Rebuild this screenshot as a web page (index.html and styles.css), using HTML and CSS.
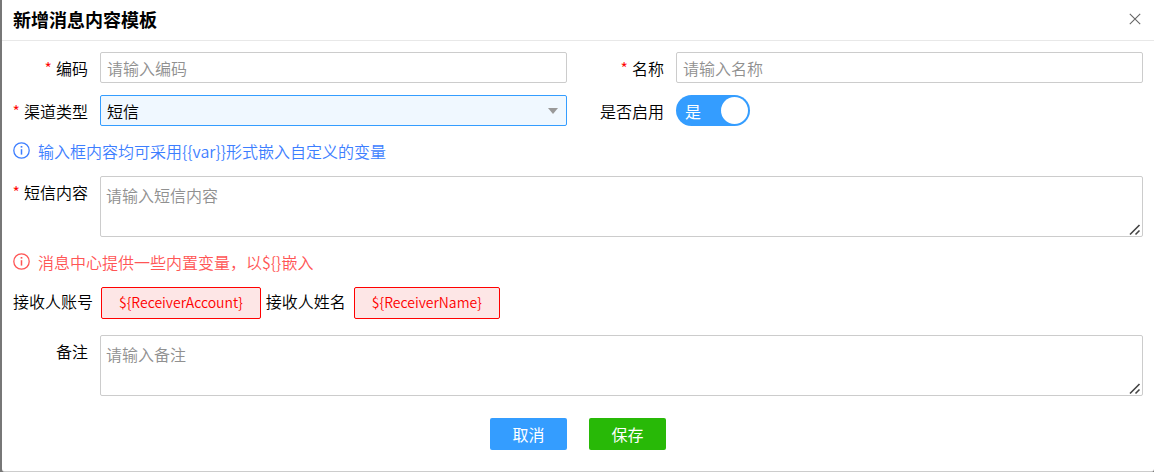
FILE: index.html
```html
<!DOCTYPE html>
<html lang="zh-CN">
<head>
    <meta charset="UTF-8">
    <meta name="viewport" content="width=device-width, initial-scale=1.0">
    <title>新增消息内容模板</title>
    <link rel="stylesheet" href="styles.css">
</head>
<body>
<div class="modal">
    <div class="modal-header">
        <h2>新增消息内容模板</h2>
        <button type="button" class="close-btn" aria-label="关闭">
            <svg width="12" height="12" viewBox="0 0 12 12" fill="none" stroke="#666" stroke-width="1.1">
                <path d="M0.8 0.8L11.2 11.2M11.2 0.8L0.8 11.2"/>
            </svg>
        </button>
    </div>
    <form class="modal-body">
        <div class="form-grid">
            <div class="form-item">
                <label for="code" class="required">编码</label>
                <input type="text" id="code" name="code" class="control" placeholder="请输入编码">
            </div>
            <div class="form-item">
                <label for="name" class="required">名称</label>
                <input type="text" id="name" name="name" class="control" placeholder="请输入名称">
            </div>
            <div class="form-item">
                <label for="channel" class="required">渠道类型</label>
                <select id="channel" name="channel" class="control select">
                    <option>短信</option>
                </select>
            </div>
            <div class="form-item">
                <label for="enabled">是否启用</label>
                <span class="switch">
                    <input type="checkbox" id="enabled" name="enabled" checked>
                    <span class="switch-text">是</span>
                </span>
            </div>
        </div>

        <p class="tip tip-blue">
            <svg class="tip-icon" width="17" height="17" viewBox="0 0 17 17" fill="none" stroke="currentColor">
                <circle cx="8.5" cy="8.5" r="7.7" stroke-width="1.3"/>
                <path d="M8.5 7.2V12.6" stroke-width="1.5"/>
                <path d="M8.5 4V5.6" stroke-width="1.7"/>
            </svg>
            输入框内容均可采用{{var}}形式嵌入自定义的变量
        </p>

        <div class="form-item form-item-top">
            <label for="content" class="required">短信内容</label>
            <textarea id="content" name="content" class="control" placeholder="请输入短信内容"></textarea>
        </div>

        <p class="tip tip-red">
            <svg class="tip-icon" width="17" height="17" viewBox="0 0 17 17" fill="none" stroke="currentColor">
                <circle cx="8.5" cy="8.5" r="7.7" stroke-width="1.3"/>
                <path d="M8.5 7.2V12.6" stroke-width="1.5"/>
                <path d="M8.5 4V5.6" stroke-width="1.7"/>
            </svg>
            消息中心提供一些内置变量，以${}嵌入
        </p>

        <div class="vars">
            <div class="var-item">
                <span>接收人账号</span>
                <button type="button" class="var-btn">${ReceiverAccount}</button>
            </div>
            <div class="var-item">
                <span>接收人姓名</span>
                <button type="button" class="var-btn">${ReceiverName}</button>
            </div>
        </div>

        <div class="form-item form-item-top">
            <label for="remark">备注</label>
            <textarea id="remark" name="remark" class="control" placeholder="请输入备注"></textarea>
        </div>

        <div class="actions">
            <button type="button" class="btn btn-cancel">取消</button>
            <button type="submit" class="btn btn-save">保存</button>
        </div>
    </form>
</div>
</body>
</html>
```
FILE: styles.css
```css
* {
    box-sizing: border-box;
}
body {
    margin: 0;
    background: #777;
    font-family: "Noto Sans CJK SC", sans-serif;
    font-size: 16px;
    font-weight: 350;
    line-height: 24px;
    color: #000;
}
button, input, select, textarea {
    font: inherit;
}
.modal {
    margin-left: 2px;
    background: #fff;
    border-bottom: 1px solid #ccc;
    border-radius: 0 0 3px 3px;
}
.modal-header {
    display: flex;
    align-items: center;
    justify-content: space-between;
    height: 41px;
    padding: 0 12px 3px 11px;
    border-bottom: 1px solid #e8e8e8;
}
.modal-header h2 {
    margin: 0;
    font-size: 18px;
    font-weight: 700;
}
.close-btn {
    display: flex;
    padding: 1px;
    border: none;
    background: none;
    cursor: pointer;
}
.modal-body {
    padding: 11px 0 21px;
}
.form-grid {
    display: grid;
    grid-template-columns: 1fr 1fr;
    row-gap: 12px;
}
.form-item {
    display: flex;
    align-items: center;
    padding-right: 11px;
}
.form-item label {
    flex: none;
    width: 98px;
    padding-right: 12px;
    text-align: right;
    white-space: nowrap;
}
.form-item-top {
    align-items: flex-start;
}
.form-item-top label {
    padding-top: 4px;
}
.required::before {
    content: "*";
    margin-right: 4px;
    color: #f00;
}
.control {
    flex: 1;
    min-width: 0;
    height: 31px;
    padding: 0 6px;
    border: 1px solid #ccc;
    border-radius: 2px;
    background: #fff;
    color: #000;
    outline: none;
}
.control::placeholder {
    color: #909090;
}
textarea.control {
    height: 61px;
    padding: 6px 5px;
    resize: vertical;
}
textarea::-webkit-resizer {
    background: url("data:image/svg+xml,%3Csvg xmlns='http://www.w3.org/2000/svg' width='15' height='15' fill='none' stroke='%23444' stroke-width='1.6'%3E%3Cpath d='M3 13.5L12.5 4M8.5 13.5L12.5 9.5'/%3E%3C/svg%3E") no-repeat right bottom;
}
.select {
    appearance: none;
    border-color: #349dff;
    background: #f0f8ff url("data:image/svg+xml,%3Csvg xmlns='http://www.w3.org/2000/svg' width='10' height='6'%3E%3Cpath d='M0 0H10L5 6Z' fill='%23999'/%3E%3C/svg%3E") no-repeat right 8px center;
}
.switch {
    position: relative;
    display: flex;
}
.switch input {
    appearance: none;
    width: 74px;
    height: 31px;
    margin: 0;
    padding: 2px;
    border-radius: 16px;
    background: #ccc;
    cursor: pointer;
}
.switch input:checked {
    background: #349dff;
}
.switch input::before {
    content: "";
    display: block;
    width: 27px;
    height: 27px;
    border-radius: 50%;
    background: #fff;
}
.switch input:checked::before {
    margin-left: auto;
}
.switch-text {
    position: absolute;
    top: 4px;
    left: 9px;
    color: #fff;
    font-weight: 400;
    pointer-events: none;
}
.tip {
    display: flex;
    align-items: center;
    gap: 8px;
    height: 50px;
    margin: 0;
    padding: 0 0 1px 11px;
}
.tip-blue {
    color: #3d7eff;
}
.tip-red {
    color: #f55;
}
.vars {
    display: flex;
    gap: 5px;
    margin-bottom: 16px;
    padding-left: 11px;
}
.var-item {
    display: flex;
    align-items: baseline;
    gap: 8px;
}
.var-btn {
    height: 32px;
    padding: 0 17px 2px;
    border: 1px solid #f00;
    border-radius: 2px;
    background: #fde6e6;
    color: #f00;
    font-size: 14px;
    cursor: pointer;
}
.actions {
    display: flex;
    justify-content: center;
    gap: 22px;
    margin-top: 22px;
}
.btn {
    width: 77px;
    height: 32px;
    padding: 0 0 1px;
    border: none;
    border-radius: 2px;
    color: #fff;
    font-weight: 400;
    cursor: pointer;
}
.btn-cancel {
    background: #349dff;
}
.btn-save {
    background: #28b907;
}
```
